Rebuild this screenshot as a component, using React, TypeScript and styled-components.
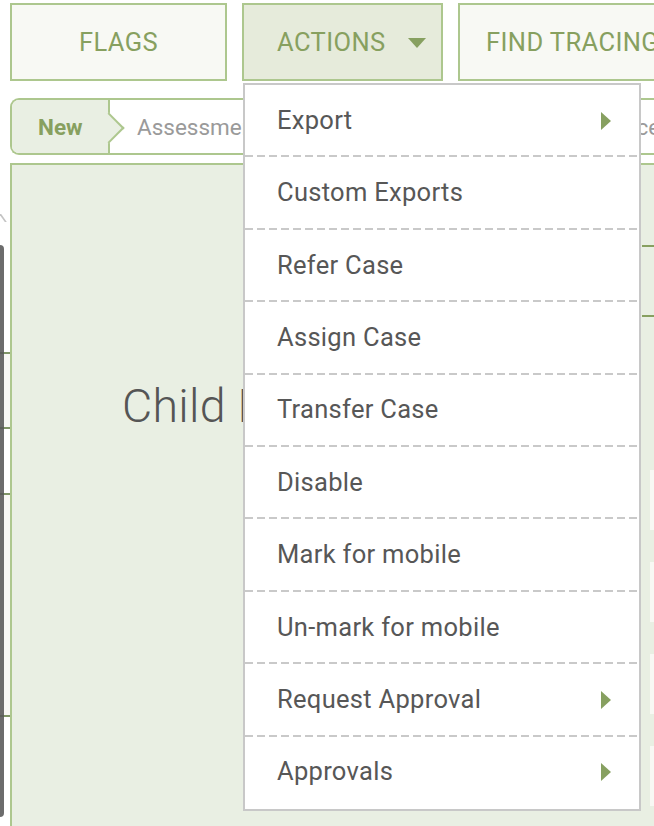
import React from "react";
import styled, { createGlobalStyle } from "styled-components";

const GlobalStyle = createGlobalStyle`
  html, body {
    margin: 0;
    padding: 0;
    background: #ffffff;
    overflow: hidden;
  }
  body {
    font-family: Roboto, "Noto Sans", "Liberation Sans", sans-serif;
  }
  * { box-sizing: border-box; }
`;

const GREEN_BORDER = "#adc78e";
const GREEN_TEXT = "#87a05f";
const GREEN_DARK = "#87a060";
const PANEL_BG = "#e9efe3";

const Page = styled.div`
  display: flex;
  width: 654px;
  height: 826px;
  overflow: hidden;
  background: #ffffff;
`;

/* ---------- left rail (partly visible side list) ---------- */
const Rail = styled.div`
  position: relative;
  flex: 0 0 10px;
  display: flex;
  flex-direction: column;
`;

const RailRow = styled.div<{ $h: number; $tone: "white" | "light" }>`
  flex: 0 0 ${(p) => p.$h}px;
  background: ${(p) => (p.$tone === "light" ? "#f8f8f4" : "#ffffff")};
  border-bottom: 2px solid #7f9566;
`;

const RailTail = styled.div`
  flex: 1;
  background: #ffffff;
`;

const RailMark = styled.div`
  position: absolute;
  top: 214px;
  left: 0;
  width: 4px;
  height: 8px;
  border-right: 2px solid #c4c4c4;
  transform: skewX(35deg);
`;

const ScrollThumb = styled.div`
  position: absolute;
  top: 245px;
  left: 0;
  width: 4px;
  height: 572px;
  background: rgba(88, 88, 88, 0.88);
  border-radius: 0 4px 4px 0;
`;

/* ---------- main column ---------- */
const Main = styled.div`
  flex: 1;
  min-width: 0;
  display: flex;
  flex-direction: column;
`;

const Toolbar = styled.div`
  display: flex;
  gap: 15px;
  padding-top: 3px;
  flex: 0 0 auto;
`;

const ToolButton = styled.div<{ $w: number; $active?: boolean; $pad?: number }>`
  flex: 0 0 ${(p) => p.$w}px;
  height: 78px;
  display: flex;
  align-items: center;
  justify-content: ${(p) => (p.$pad !== undefined ? "flex-start" : "center")};
  padding-left: ${(p) => (p.$pad !== undefined ? `${p.$pad}px` : "0")};
  gap: 22px;
  border: 2px solid ${GREEN_BORDER};
  background: ${(p) => (p.$active ? "#e6ebdb" : "#f8f9f4")};
  color: ${GREEN_TEXT};
  font-size: 25.5px;
  letter-spacing: 0.4px;
  text-transform: uppercase;
  white-space: nowrap;
`;

const ActionsWrap = styled.div`
  position: relative;
  flex: 0 0 201px;
  display: flex;
`;

const Caret = styled.span`
  width: 0;
  height: 0;
  border-left: 9px solid transparent;
  border-right: 9px solid transparent;
  border-top: 10px solid ${GREEN_DARK};
  margin-top: 2px;
`;

/* ---------- dropdown ---------- */
const Menu = styled.div`
  position: absolute;
  top: 80px;
  left: 1px;
  z-index: 10;
  width: 398px;
  height: 728px;
  display: flex;
  flex-direction: column;
  background: #ffffff;
  border: 2px solid #c8c8c8;
`;

const MenuItem = styled.div<{ $last?: boolean }>`
  flex: 1;
  display: flex;
  align-items: center;
  justify-content: space-between;
  padding: 0 28px 3px 32px;
  color: #575757;
  font-size: 25.5px;
  letter-spacing: 0.3px;
  background-image: ${(p) =>
    p.$last
      ? "none"
      : "repeating-linear-gradient(to right, #c9c9c9 0 8px, transparent 8px 12px)"};
  background-size: 100% 2px;
  background-position: bottom left;
  background-repeat: no-repeat;
`;

const SubArrow = styled.span`
  width: 0;
  height: 0;
  margin-top: 2px;
  border-top: 9.5px solid transparent;
  border-bottom: 9.5px solid transparent;
  border-left: 10px solid ${GREEN_DARK};
`;

/* ---------- breadcrumb ---------- */
const Breadcrumb = styled.div`
  margin-top: 17px;
  height: 57px;
  flex: 0 0 auto;
  display: flex;
  border: 2px solid ${GREEN_BORDER};
  border-right: none;
  border-radius: 9px 0 0 9px;
  overflow: hidden;
  white-space: nowrap;
`;

const Step = styled.div<{ $current?: boolean; $w: number }>`
  position: relative;
  flex: 0 0 ${(p) => p.$w}px;
  display: flex;
  align-items: center;
  padding-left: ${(p) => (p.$current ? 26 : 27)}px;
  background: ${(p) => (p.$current ? PANEL_BG : "#ffffff")};
  color: ${(p) => (p.$current ? GREEN_TEXT : "#9a9a9a")};
  font-size: 22.5px;
  font-weight: ${(p) => (p.$current ? 700 : 400)};
  border-right: 2px solid ${GREEN_BORDER};
  z-index: ${(p) => (p.$current ? 2 : 1)};

  &::after {
    content: "";
    position: absolute;
    right: -12px;
    top: 50%;
    width: 20px;
    height: 20px;
    margin-top: -10px;
    background: ${(p) => (p.$current ? PANEL_BG : "#ffffff")};
    border-top: 2px solid ${GREEN_BORDER};
    border-right: 2px solid ${GREEN_BORDER};
    transform: rotate(45deg);
  }
`;

/* ---------- panel ---------- */
const Panel = styled.div`
  margin-top: 8px;
  flex: 1;
  display: grid;
  grid-template-columns: 630px 1fr;
  background: ${PANEL_BG};
  border-top: 2px solid ${GREEN_BORDER};
  border-left: 2px solid ${GREEN_BORDER};
`;

const TitleArea = styled.div`
  padding: 214px 0 0 110px;
`;

const Title = styled.h1`
  margin: 0;
  font-size: 46.5px;
  font-weight: 300;
  color: #555555;
  letter-spacing: 0.3px;
  white-space: nowrap;
`;

const FormArea = styled.div`
  display: flex;
  flex-direction: column;
`;

const FormHeader = styled.div<{ $h: number }>`
  flex: 0 0 ${(p) => p.$h}px;
  border-bottom: 2px solid ${GREEN_DARK};
`;

const FieldList = styled.div`
  display: flex;
  flex-direction: column;
  gap: 32px;
  padding: 153px 0 0 8px;
`;

const Field = styled.div`
  height: 60px;
  background: #f8f8f4;
`;

const menuItems: { label: string; sub?: boolean }[] = [
  { label: "Export", sub: true },
  { label: "Custom Exports" },
  { label: "Refer Case" },
  { label: "Assign Case" },
  { label: "Transfer Case" },
  { label: "Disable" },
  { label: "Mark for mobile" },
  { label: "Un-mark for mobile" },
  { label: "Request Approval", sub: true },
  { label: "Approvals", sub: true },
];

export default function App() {
  return (
    <>
      <GlobalStyle />
      <Page>
        <Rail>
          <RailRow $h={354} $tone="white" />
          <RailRow $h={75} $tone="light" />
          <RailRow $h={66} $tone="white" />
          <RailRow $h={222} $tone="light" />
          <RailTail />
          <RailMark />
          <ScrollThumb />
        </Rail>
        <Main>
          <Toolbar>
            <ToolButton $w={217}>Flags</ToolButton>
            <ActionsWrap>
              <ToolButton $w={201} $active $pad={33}>
                Actions
                <Caret />
              </ToolButton>
              <Menu>
                {menuItems.map((m, i) => (
                  <MenuItem key={m.label} $last={i === menuItems.length - 1}>
                    <span>{m.label}</span>
                    {m.sub && <SubArrow />}
                  </MenuItem>
                ))}
              </Menu>
            </ActionsWrap>
            <ToolButton $w={230} $pad={26}>Find Tracing Match</ToolButton>
          </Toolbar>
          <Breadcrumb>
            <Step $current $w={98}>New</Step>
            <Step $w={450}>Assessment</Step>
            <Step $w={200}>Service</Step>
          </Breadcrumb>
          <Panel>
            <TitleArea>
              <Title>Child Protection</Title>
            </TitleArea>
            <FormArea>
              <FormHeader $h={82} />
              <FormHeader $h={70} />
              <FieldList>
                <Field />
                <Field />
                <Field />
                <Field />
              </FieldList>
            </FormArea>
          </Panel>
        </Main>
      </Page>
    </>
  );
}
